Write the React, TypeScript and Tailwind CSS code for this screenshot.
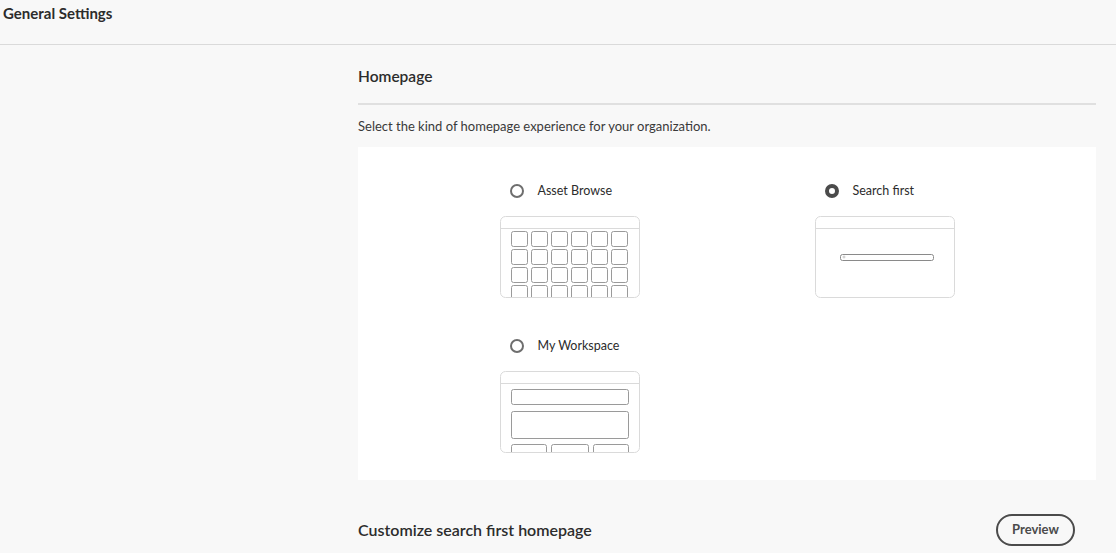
import React from "react";

const font = { fontFamily: "Lato, 'Open Sans', sans-serif" };

function Radio(props: { checked?: boolean; label: string }) {
  return (
    <div className="flex items-center gap-[14px] pl-[10px] h-[20px]">
      {props.checked ? (
        <span className="w-[14px] h-[14px] rounded-full border-[4px] border-[#4b4b4b] bg-white" />
      ) : (
        <span className="w-[14px] h-[14px] rounded-full border-2 border-[#6e6e6e] bg-white" />
      )}
      <span className="text-[12.5px] text-[#2c2c2c]">{props.label}</span>
    </div>
  );
}

function Frame(props: { children?: React.ReactNode }) {
  return (
    <svg width="140" height="82" viewBox="0 0 140 82">
      <defs>
        <clipPath id="inner">
          <rect x="1" y="1" width="138" height="80" rx="5" />
        </clipPath>
      </defs>
      <rect x="0.5" y="0.5" width="139" height="81" rx="5" fill="white" stroke="#dadada" />
      <line x1="1" y1="12.5" x2="139" y2="12.5" stroke="#dadada" />
      <g clipPath="url(#inner)">{props.children}</g>
    </svg>
  );
}

function AssetPreview() {
  const cols = [11, 31, 51, 71, 91, 111];
  const rows = [15, 33, 51, 69];
  return (
    <Frame>
      {rows.map((y) =>
        cols.map((x) => (
          <rect key={x + "-" + y} x={x + 0.5} y={y + 0.5} width="16" height="15" rx="2" fill="none" stroke="#9a9a9a" />
        ))
      )}
    </Frame>
  );
}

function SearchPreview() {
  return (
    <Frame>
      <rect x="25.5" y="38.5" width="93" height="6" rx="2" fill="none" stroke="#8a8a8a" />
      <circle cx="29" cy="41" r="1" fill="none" stroke="#aaa" strokeWidth="0.6" />
    </Frame>
  );
}

function WorkspacePreview() {
  return (
    <Frame>
      <rect x="11.5" y="18.5" width="117" height="15" rx="2" fill="none" stroke="#9a9a9a" />
      <rect x="11.5" y="40.5" width="117" height="27" rx="2" fill="none" stroke="#9a9a9a" />
      <rect x="11.5" y="73.5" width="35" height="20" rx="2" fill="none" stroke="#9a9a9a" />
      <rect x="51.5" y="73.5" width="37" height="20" rx="2" fill="none" stroke="#9a9a9a" />
      <rect x="93.5" y="73.5" width="35" height="20" rx="2" fill="none" stroke="#9a9a9a" />
    </Frame>
  );
}

function Option(props: { label: string; checked?: boolean; children: React.ReactNode }) {
  return (
    <div className="flex justify-center">
      <div className="w-[140px] flex flex-col">
        <Radio label={props.label} checked={props.checked} />
        <div className="mt-[15px]">{props.children}</div>
      </div>
    </div>
  );
}

export default function App() {
  return (
    <div className="w-[1116px] h-[553px] bg-[#f8f8f8] overflow-hidden text-[#2c2c2c]" style={font}>
      <div className="h-[45px] border-b border-[#dadada] pl-[3px] pt-[4px]">
        <h1 className="text-[15px] font-bold text-[#2c2c2c] leading-[18px]">General Settings</h1>
      </div>

      <div className="ml-[358px] w-[738px]">
        <div className="pt-[21px] pb-[17px] border-b-2 border-[#e0e0e0]">
          <h2 className="text-[15.5px] font-semibold leading-[20px] text-[#2c2c2c]">Homepage</h2>
        </div>
        <p className="mt-[12px] text-[13px] leading-[18px] text-[#3a3a3a]">
          Select the kind of homepage experience for your organization.
        </p>

        <div className="mt-[12px] h-[333px] bg-white px-[54px] pt-[34px]">
          <div className="grid grid-cols-2 gap-y-[38px]">
            <Option label="Asset Browse">
              <AssetPreview />
            </Option>
            <Option label="Search first" checked>
              <SearchPreview />
            </Option>
            <Option label="My Workspace">
              <WorkspacePreview />
            </Option>
          </div>
        </div>

        <div className="mt-[34px] flex items-center justify-between pr-[21px]">
          <h2 className="text-[16px] font-semibold text-[#2c2c2c]">Customize search first homepage</h2>
          <button className="w-[79px] h-[32px] rounded-full border-2 border-[#4b4b4b] text-[13px] font-bold text-[#4b4b4b]">
            Preview
          </button>
        </div>
      </div>
    </div>
  );
}
